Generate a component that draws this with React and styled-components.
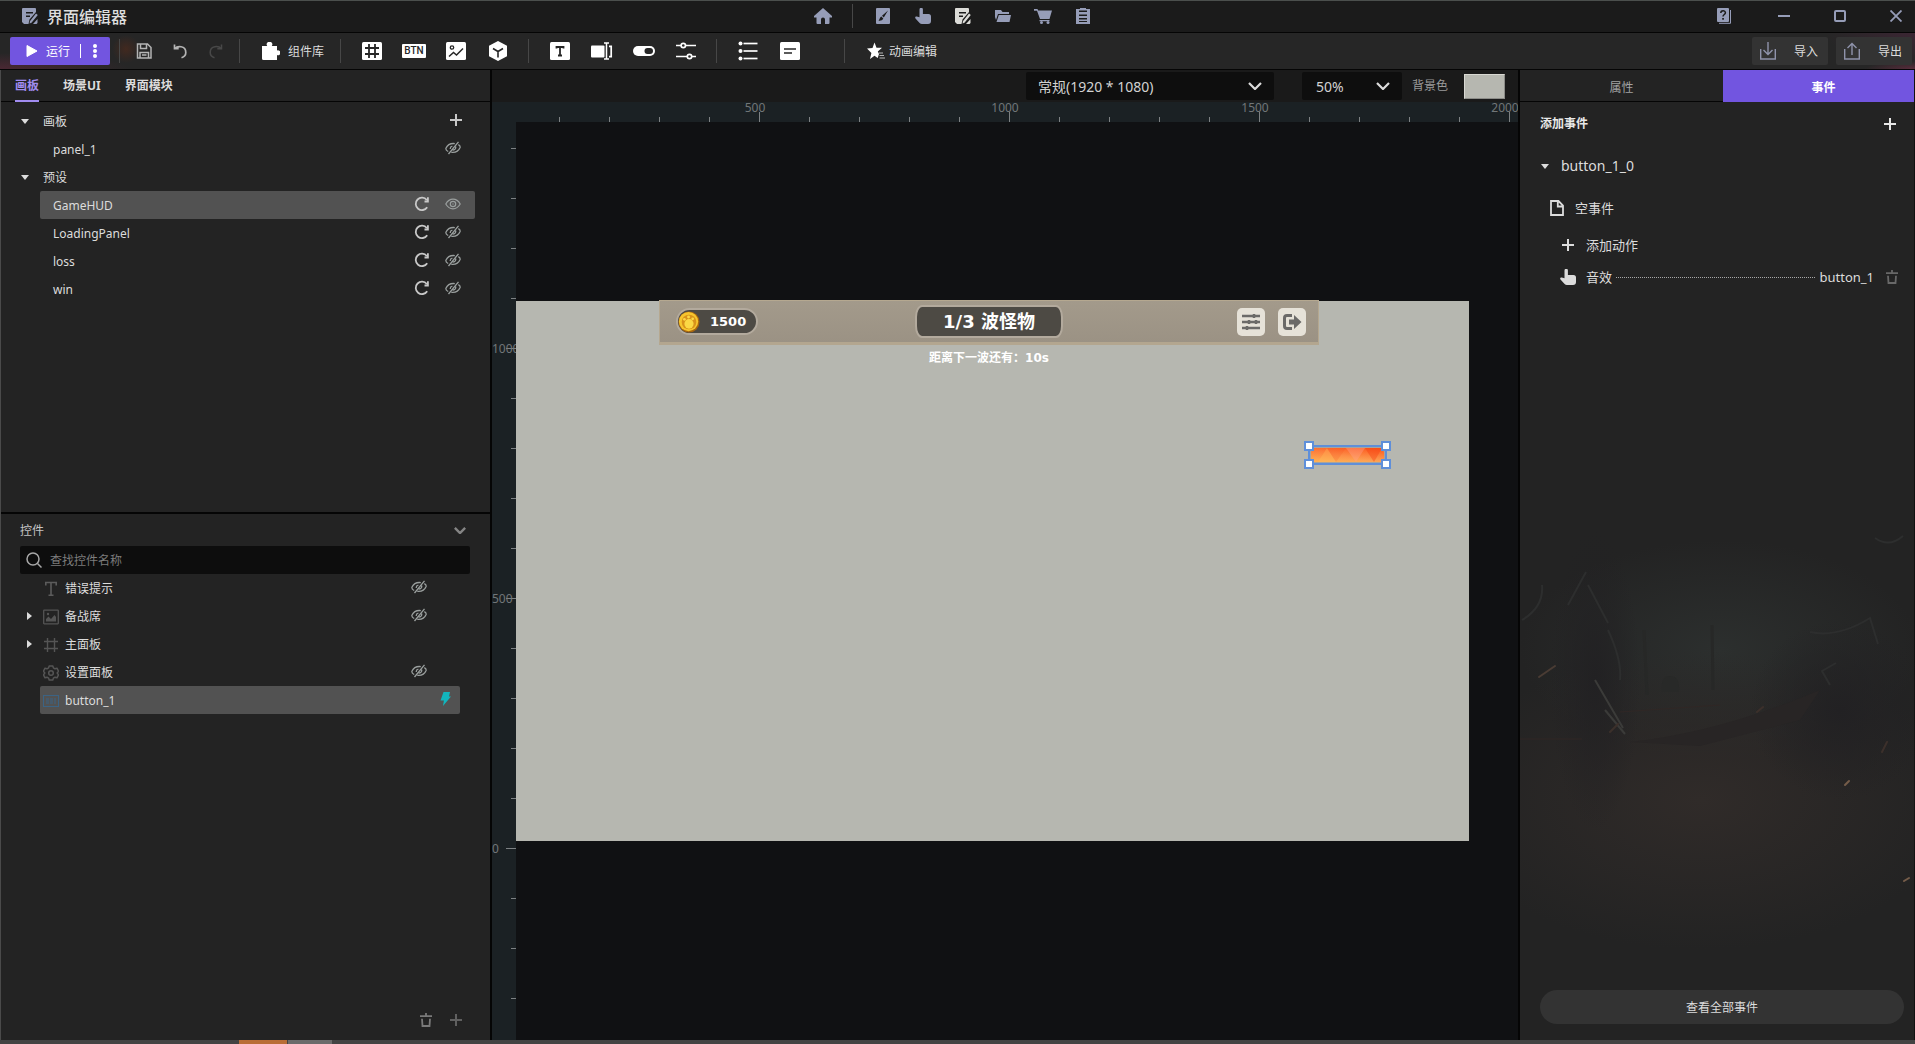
import React, { useState } from "react";
import styled, { createGlobalStyle, css } from "styled-components";

const GlobalStyle = createGlobalStyle`
  * {
    box-sizing: border-box;
  }

  body {
    margin: 0;
    background: #232323;
    color: #dcdcdc;
    font: 12px/16px "Noto Sans", "Noto Sans CJK SC", sans-serif;
  }

  button, input, select {
    font: inherit;
    color: inherit;
  }

  button {
    padding: 0;
    border: 0;
    background: none;
    cursor: pointer;
  }

  svg {
    display: block;
    flex: none;
  }

  ul {
    list-style: none;
    margin: 0;
    padding: 0;
  }
`;

/* ---------- icons ---------- */

const Svg = ({ size = 16, w, h, box = "0 0 16 16", children, ...rest }) => (
  <svg width={w || size} height={h || size} viewBox={box} fill="none" aria-hidden="true" {...rest}>
    {children}
  </svg>
);

const NoteIcon = (p) => (
  <Svg {...p}>
    <path
      fill="currentColor"
      fillRule="evenodd"
      d="M1 0h12a1 1 0 0 1 1 1v3L7.500 11.500 6.500 16H2l-2-2V1a1 1 0 0 1 1-1zm3 4v1.500h7V4zm0 3.500V9h4V7.500z"
    />
    <path fill="currentColor" d="M14 5.500l1.800 1.600L9.500 14.800 7.600 15.500l.3-2.300zM11 16l4.500-5V15l-1 1z" />
  </Svg>
);
const HomeIcon = () => (
  <Svg w={18} h={16} box="0 0 18 16">
    <path fill="currentColor" d="M9 0l9 8v1.500h-2.500V15a1 1 0 0 1-1 1H11v-4.500a2 2 0 0 0-4 0V16H3.500a1 1 0 0 1-1-1V9.500H0V8z" />
  </Svg>
);
const PaintIcon = () => (
  <Svg>
    <rect x="1" width="14" height="16" rx="1" fill="currentColor" />
    <path fill="#1b1b1b" d="M13 2.500L8.800 9.500 7 7.800zM6.300 8.600l2 2C7.500 12.500 5.500 13 3.500 12.700c1.300-.8.800-2.900 2.800-4.100z" />
  </Svg>
);
const HandIcon = () => (
  <Svg>
    <path
      fill="currentColor"
      d="M4.500 1.500a1.700 1.700 0 0 1 3.400 0V6h5.600A2.500 2.500 0 0 1 16 8.500V13a3 3 0 0 1-3 3H7c-1 0-1.800-.4-2.400-1.100L.5 10.500C-.3 9.300.4 8.200 1.800 8.400l2.700.9z"
    />
  </Svg>
);
const FolderIcon = () => (
  <Svg>
    <path fill="currentColor" d="M0 2h6l1.500 2H14v2H3L1 12 0 9zM3.800 7H16l-1.500 7H1.500z" />
  </Svg>
);
const CartIcon = () => (
  <Svg w={18} h={16} box="0 0 18 16">
    <path fill="currentColor" d="M0 1h3.500l.6 1.500H18L15.500 11H6L3 2.800H0zM5.500 12h10v1.200h-10z" />
    <circle cx="7.500" cy="14.500" r="1.500" fill="currentColor" />
    <circle cx="14" cy="14.500" r="1.500" fill="currentColor" />
  </Svg>
);
const ClipboardIcon = () => (
  <Svg>
    <path fill="currentColor" fillRule="evenodd" d="M1 1h4V0h6v1h4v15H1zm3 1.500V4h8V2.500zm0 4V8h8V6.500zm0 3.500v1.500h8V10zm0 3v1h8v-1z" />
  </Svg>
);
const HelpIcon = () => (
  <Svg>
    <rect x="1" y="0" width="12" height="14" rx="1" fill="currentColor" />
    <path d="M14.500 2v13.300H3" stroke="currentColor" />
    <path d="M4.800 5c0-3 4.600-2.900 4.600-.2C9.400 6.500 7 6.500 7 8.500" stroke="#1b1b1b" strokeWidth="1.500" />
    <rect x="6.200" y="10" width="1.700" height="1.700" fill="#1b1b1b" />
  </Svg>
);
const MinIcon = () => (
  <Svg size={12} box="0 0 12 12">
    <path d="M0 6h12" stroke="currentColor" strokeWidth="2" />
  </Svg>
);
const MaxIcon = () => (
  <Svg size={12} box="0 0 12 12">
    <rect x="1" y="1" width="10" height="10" rx="1" stroke="currentColor" strokeWidth="2" />
  </Svg>
);
const CloseIcon = () => (
  <Svg size={12} box="0 0 12 12">
    <path d="M0.500 0.500l11 11M11.500 0.500l-11 11" stroke="currentColor" strokeWidth="1.800" />
  </Svg>
);
const PlayIcon = () => (
  <Svg w={12} h={12} box="0 0 12 12">
    <path d="M1 0.500v11l10-5.500z" fill="currentColor" stroke="currentColor" strokeLinejoin="round" />
  </Svg>
);
const MoreIcon = () => (
  <Svg w={4} h={14} box="0 0 4 14">
    {[2, 7, 12].map((y) => (
      <circle key={y} cx="2" cy={y} r="2" fill="currentColor" />
    ))}
  </Svg>
);
const SaveIcon = () => (
  <Svg stroke="currentColor" strokeWidth="1.500">
    <path d="M1.500 1h10L15 4.500V15H1.500zM4.500 1.500v4h6v-4M4 15V9.500h8.500V15M6 12h4.500" />
  </Svg>
);
const UndoIcon = () => (
  <Svg stroke="currentColor" strokeWidth="1.700">
    <path d="M2.500 1.500v4.200h4.200M3 5.500C5 3 13.800 2 13.800 9.500c0 3-2 4.500-4.300 5.300" />
  </Svg>
);
const RedoIcon = () => (
  <Svg stroke="currentColor" strokeWidth="1.500">
    <path d="M13.500 1.500v4.200H9.300M13 5.500C11 3 2.200 2 2.200 9.500c0 3 2 4.500 4.300 5.300" />
  </Svg>
);
const PuzzleIcon = () => (
  <Svg size={18} box="0 0 18 18">
    <path fill="currentColor" d="M0 4h5.200a2.800 2.800 0 1 1 4.600 0H15v4.500a2.500 2.500 0 1 1 0 4.600V18H1.500A1.500 1.500 0 0 1 0 16.500z" />
  </Svg>
);
const GridIcon = () => (
  <Svg size={20} box="0 0 20 20">
    <rect y="1" width="20" height="18" rx="1.500" fill="currentColor" />
    <path d="M7 3v14M13 3v14M3 7h14M3 13h14" stroke="#262626" strokeWidth="1.800" />
  </Svg>
);
const ImageIcon = () => (
  <Svg size={20} box="0 0 20 20">
    <rect y="1" width="20" height="18" rx="1.500" fill="currentColor" />
    <circle cx="6" cy="6.500" r="1.700" stroke="#262626" strokeWidth="1.300" />
    <path d="M3 15.500l4.500-4 3 2.500L17 7.500" stroke="#262626" strokeWidth="1.500" />
  </Svg>
);
const CubeIcon = () => (
  <Svg size={20} box="0 0 20 20">
    <path d="M10 0l9 4.800v10.400L10 20l-9-4.800V4.800z" fill="currentColor" />
    <path d="M5 7.500l5 3 5-3M10 10.500v6" stroke="#262626" strokeWidth="1.600" />
  </Svg>
);
const TextIcon = () => (
  <Svg size={20} box="0 0 20 20">
    <rect y="1" width="20" height="18" rx="1.500" fill="currentColor" />
    <path d="M6.500 7.500V6h7v1.500M10 6v9M8 14.500h4" stroke="#262626" strokeWidth="1.800" />
  </Svg>
);
const InputIcon = () => (
  <Svg w={22} h={18} box="0 0 22 18">
    <rect y="3.500" width="13.500" height="12" rx="1" fill="currentColor" />
    <path d="M13 1h5M15.500 1v16M13 17h5" stroke="currentColor" strokeWidth="1.500" />
    <path d="M18 4.300h2.200v10.400H18" stroke="currentColor" strokeWidth="1.700" />
  </Svg>
);
const SwitchIcon = () => (
  <Svg w={22} h={10} box="0 0 22 10">
    <rect width="22" height="10" rx="5" fill="currentColor" />
    <rect x="11.500" y="2" width="8.500" height="6" rx="3" fill="#262626" />
  </Svg>
);
const SlidersIcon = () => (
  <Svg size={20} box="0 0 20 20" stroke="currentColor" strokeWidth="1.700">
    <path d="M0 4.500h5M9.500 4.500H20M0 15.500h11M16 15.500h4" />
    <circle cx="7.300" cy="4.500" r="2.200" />
    <circle cx="13.500" cy="15.500" r="2.200" />
  </Svg>
);
const ListIcon = () => (
  <Svg size={20} box="0 0 20 20">
    {[2.5, 10, 17.5].map((y) => (
      <g key={y}>
        <circle cx="2.500" cy={y} r="2" fill="currentColor" />
        <path d={`M5.500 ${y}h14`} stroke="currentColor" strokeWidth="1.700" />
      </g>
    ))}
  </Svg>
);
const TextAreaIcon = () => (
  <Svg size={20} box="0 0 20 20">
    <rect y="1" width="20" height="18" rx="1.500" fill="currentColor" />
    <path d="M4 8h12M4 12h8" stroke="#262626" strokeWidth="1.700" />
  </Svg>
);
const StarIcon = () => (
  <Svg size={18} box="0 0 18 18">
    <path fill="currentColor" d="M7.500 0.500l2 5.300h5.500l-4.200 3.600 1.200 2.600-1.300 4-3.200-2.300L3 17l1.400-6L0 6.500l5.500-.5z" />
    <path d="M12 11h4M12.500 13.500h4.500M12.500 16h5.500" stroke="#b8b8b8" />
  </Svg>
);
const ImportIcon = ({ up }) => (
  <Svg w={16} h={18} box="0 0 16 18" stroke="currentColor" strokeWidth="1.400">
    <path d="M.7 7v10h14.600V7" />
    <path d={up ? "M8 13V2M3.500 6L8 1.500 12.500 6" : "M8 0v12M3.500 8L8 12.500 12.500 8"} />
  </Svg>
);
const PlusIcon = () => (
  <Svg size={12} box="0 0 12 12">
    <path d="M6 0v12M0 6h12" stroke="currentColor" strokeWidth="2" />
  </Svg>
);
const TrashIcon = () => (
  <Svg w={12} h={14} box="0 0 12 14" stroke="currentColor" strokeWidth="1.800">
    <path d="M0 3.200h12M6 0v3M2 5.800l.5 7.200h7l.5-7.200" />
  </Svg>
);
const ChevronIcon = ({ small }) => (
  <Svg w={small ? 12 : 14} h={small ? 7 : 8} box="0 0 14 8">
    <path d="M1 1l6 6 6-6" stroke="currentColor" strokeWidth={small ? 2.800 : 2.200} />
  </Svg>
);
const Caret = ({ right }) => (
  <Svg w={right ? 5 : 8} h={right ? 8 : 5} box={right ? "0 0 5 8" : "0 0 8 5"}>
    <path fill="currentColor" d={right ? "M0 0v8l5-4z" : "M0 0h8L4 5z"} />
  </Svg>
);
const EyeIcon = () => (
  <Svg stroke="currentColor" strokeWidth="1.200">
    <path d="M.8 8C4.500 1.600 11.500 1.600 15.200 8 11.500 14.400 4.500 14.400.8 8z" />
    <circle cx="8" cy="8" r="2.700" />
    <circle cx="8" cy="8" r="0.700" fill="currentColor" stroke="none" />
  </Svg>
);
const EyeOffIcon = () => (
  <Svg stroke="currentColor" strokeWidth="1.300">
    <path d="M3.200 11.500C1.300 10.500.7 9.300.9 8.300 2.500 4.800 6 3.200 9.800 3.600M3.500 14L13.500 1.800M13.300 4.600c1.500.8 2 1.900 1.800 2.900-1.500 3.600-5.200 5.200-8.800 4.800M10.600 6.600c.6 2-1 3.500-2.900 3.600M5.300 9c-.2-1.400.6-2.500 2.100-2.800" />
  </Svg>
);
const RefreshIcon = () => (
  <Svg stroke="currentColor" strokeWidth="1.800">
    <path d="M13.200 11.200A6.200 6.200 0 1 1 12.800 4M13.900 1.200v4.300H10.500" />
  </Svg>
);
const SearchIcon = () => (
  <Svg stroke="currentColor" strokeWidth="1.500">
    <circle cx="7" cy="7" r="6" />
    <path d="M11.500 11.500l4 4" />
  </Svg>
);
const TIcon = () => (
  <Svg stroke="#5c5c5c" strokeWidth="1.600">
    <path d="M2.800 4.500v-3h10.400v3M8 1.500v13M5.500 14.300h5" />
  </Svg>
);
const PictureIcon = () => (
  <Svg color="#555">
    <rect x="0.700" y="1.200" width="14.600" height="13.600" rx="0.500" stroke="currentColor" strokeWidth="1.300" />
    <path d="M3 12.500V10l2.500-2.500L8 10l3.500-4L13 8v4.500z" fill="currentColor" />
    <circle cx="5" cy="5" r="1.200" fill="currentColor" />
  </Svg>
);
const HashIcon = () => (
  <Svg stroke="#555" strokeWidth="1.400">
    <path d="M4.500 1v14M11.500 1v14M1 4.500h14M1 11.500h14" />
  </Svg>
);
const GearIcon = () => (
  <Svg stroke="#555" strokeWidth="1.500" strokeLinejoin="round">
    <path d="M6.200.9h3.600l.6 2 1.600.9 2-.6 1.500 2.900L14.200 8l1.300 1.900-1.500 2.900-2-.6-1.600.9-.6 2H6.200l-.6-2-1.600-.9-2 .6L.5 9.900 1.800 8 .5 6.100 2 3.200l2 .6 1.600-.9z" />
    <circle cx="8" cy="8" r="2.300" />
  </Svg>
);
const ButtonIcon = () => (
  <Svg stroke="#3b6384">
    <rect x="0.500" y="2.500" width="15" height="11" />
    <path d="M3 6h10M3 8h10M3 10h10" strokeDasharray="3 1" />
  </Svg>
);
const BoltIcon = () => (
  <Svg>
    <path fill="#12b5bd" d="M6.500 1h6.500l-1 4.500h2L6 15l.9-5.500H3.500z" />
  </Svg>
);
const DocIcon = () => (
  <Svg stroke="currentColor" strokeWidth="1.800">
    <path d="M2 1h7.500L14 5.500V15H2zM8.800 1v5.500H14" />
  </Svg>
);

/* ---------- frame ---------- */

const Shell = styled.div`
  display: flex;
  flex-direction: column;
  height: 100vh;
  min-width: 1280px;
  overflow: hidden;
  border-top: 1px solid #4b4f4d;
`;

const TitleBar = styled.header`
  display: grid;
  grid-template-columns: 1fr auto 1fr;
  align-items: center;
  height: 32px;
  padding: 0 13px 1px 22px;
  background: #1b1b1b;
  border-bottom: 1px solid #050505;
  color: #969db8;
`;

const AppTitle = styled.h1`
  display: flex;
  align-items: center;
  gap: 9px;
  margin: 0;
  font-size: 16px;
  line-height: 24px;
  font-weight: 500;

  span {
    padding-top: 2px;
    color: #dedede;
  }
`;

const ModeNav = styled.nav`
  display: flex;
  align-items: center;
  padding-right: 19px;
`;

const ModeButton = styled.button`
  display: grid;
  place-items: center;
  width: 40px;
  height: 24px;
  color: ${({ $active }) => ($active ? "#dcdcd8" : "#969db8")};
`;

const Divider = styled.i`
  width: 1px;
  height: 24px;
  background: #474747;
  margin: 0 10px 0 9px;
`;

const WindowControls = styled.div`
  display: flex;
  align-items: center;
  justify-content: flex-end;
  gap: 44px;

  button:first-child {
    padding-right: 2px;
  }
`;

const Toolbar = styled.div`
  display: flex;
  align-items: center;
  height: 37px;
  flex: none;
  padding: 0 3px 0 10px;
  border-bottom: 1px solid #050505;
  background:
    radial-gradient(ellipse 130px 16px at 0 100%, #4a2833 0%, transparent 100%),
    radial-gradient(circle 14px at 126px 16px, #42291f, transparent),
    radial-gradient(ellipse 90px 30px at 100% 0, #3b2633, transparent),
    radial-gradient(ellipse 50px 8px at 100% 100%, #5a2c3c, transparent),
    #262626;

  button span {
    padding-top: 1px;
  }
`;

const RunButton = styled.div`
  display: flex;
  align-items: center;
  width: 100px;
  height: 28px;
  padding-left: 16px;
  border-radius: 2px;
  background: #7255e0;
  color: #fff;

  button {
    display: flex;
    align-items: center;
    gap: 8px;
    height: 28px;
  }

  button + button {
    margin-left: 10px;
    gap: 12px;

    &::before {
      content: "";
      width: 1px;
      height: 14px;
      background: #fff;
    }
  }
`;

const History = styled.div`
  display: flex;
  gap: 20px;
  padding: 0 6px;
  color: #b4b4b4;

  button:disabled {
    color: #484848;
  }
`;

const LabelButton = styled.button`
  display: flex;
  align-items: center;
  gap: ${({ $gap }) => $gap || 8}px;
  padding: 0 7px 0 12px;
  color: #fff;

  span {
    color: #dcdcdc;
  }
`;

const ToolGroup = styled.div`
  display: flex;
  color: #fff;
  margin-right: ${({ $last }) => ($last ? 24 : 0)}px;
`;

const ToolButton = styled.button`
  display: grid;
  place-items: center;
  width: 42px;
  height: 28px;
`;

const BtnGlyph = styled.b`
  width: 24px;
  height: 14px;
  border-radius: 1px;
  background: #fff;
  color: #262626;
  font: 500 10px/14px Roboto, sans-serif;
  text-align: center;
`;

const TransferGroup = styled.div`
  display: flex;
  gap: 8px;
  margin-left: auto;
`;

const TransferButton = styled.button`
  display: flex;
  align-items: center;
  justify-content: space-between;
  width: 76px;
  height: 28px;
  padding: 0 10px 0 8px;
  border-radius: 2px;
  background: #333;
  color: #8f93ab;

  span {
    color: #dcdcdc;
  }
`;

const Workspace = styled.main`
  display: grid;
  grid-template-columns: 492px minmax(0, 1fr) 397px;
  flex: 1;
  min-height: 0;
`;

const StatusStrip = styled.footer`
  display: flex;
  gap: 1px;
  height: 4px;
  flex: none;
  padding-left: 239px;
  background: #434343;

  i {
    width: 48px;
    background: #b96d36;
  }

  i + i {
    width: 44px;
    background: #6b6b6b;
  }
`;

/* ---------- left side ---------- */

const LeftSide = styled.aside`
  display: flex;
  flex-direction: column;
  min-height: 0;
  border-left: 1px solid #4a4a4a;
  border-right: 2px solid #050505;
`;

const Section = styled.section`
  display: flex;
  flex-direction: column;
  flex: ${({ $grow }) => $grow} 1 0;
  min-height: 0;

  & + & {
    border-top: 2px solid #050505;
  }
`;

const TabList = styled.div`
  display: flex;
  gap: 24px;
  height: 32px;
  padding-left: 14px;
  border-bottom: 1px solid #050505;
`;

const Tab = styled.button`
  height: 32px;
  padding-top: 2px;
  font-weight: 700;
  color: #dcdcdc;
  border-bottom: 2px solid transparent;

  ${({ $active }) =>
    $active &&
    css`
      color: #a18cf0;
      border-color: #a18cf0;
    `}
`;

const Tree = styled.ul`
  padding-top: ${({ $top }) => $top || 0}px;
`;

const TreeRow = styled.li`
  display: flex;
  height: 28px;
  padding-right: ${({ $controls }) => ($controls ? 30 : 15)}px;
`;

const CaretSlot = styled.span`
  display: flex;
  align-items: center;
  width: 39px;
  padding-left: ${({ $controls }) => ($controls ? 26 : 20)}px;
`;

const RowBody = styled.div`
  display: flex;
  align-items: center;
  flex: 1;
  gap: 6px;
  padding: 2px ${({ $end }) => $end || 13}px 0 ${({ $indent }) => ($indent ? 13 : 3)}px;
  border-radius: 2px;
  background: ${({ $selected }) => ($selected ? "#525252" : "transparent")};
  color: #dcdcdc;
`;

const RowActions = styled.span`
  display: flex;
  align-items: center;
  gap: ${({ $gap }) => $gap || 15}px;
  margin-left: auto;
  padding-bottom: 4px;
  color: #c8c8c8;
`;

const EyeButton = styled.button`
  width: 16px;
  height: 16px;
  color: #9a9f9e;
`;

const EventSlot = styled.span`
  width: 16px;
  height: 16px;
`;

const ControlsHead = styled.div`
  display: flex;
  align-items: center;
  justify-content: space-between;
  height: 32px;
  padding: 1px 24px 0 19px;
  color: #c4c4c4;

  button {
    color: #858585;
  }
`;

const SearchBox = styled.label`
  display: flex;
  align-items: center;
  gap: 8px;
  height: 28px;
  margin: 0 20px 0 19px;
  padding: 0 6px;
  border-radius: 2px;
  background: #0d0d0d;
  color: #a8a8a8;

  input {
    flex: 1;
    min-width: 0;
    padding: 1px 0 0;
    border: 0;
    outline: 0;
    background: none;
  }

  input::placeholder {
    color: #7c7c7c;
    opacity: 1;
  }
`;

const ControlsFoot = styled.div`
  display: flex;
  align-items: center;
  justify-content: flex-end;
  gap: 18px;
  height: 40px;
  margin-top: auto;
  padding-right: 28px;
  color: #7a7a7a;

  button + button {
    color: #606060;
  }
`;

/* ---------- stage ---------- */

const Stage = styled.section`
  display: grid;
  grid-template: 32px 20px minmax(0, 1fr) / 24px minmax(0, 1fr);
  min-height: 0;
  background: #1b2124;
`;

const StageBar = styled.div`
  grid-column: 1 / -1;
  display: flex;
  align-items: center;
  justify-content: flex-end;
  padding-right: 13px;
  background: #1a1a1a;
`;

const SelectBox = styled.div`
  display: grid;
  align-items: center;
  width: ${({ $width }) => $width}px;
  height: 28px;
  margin-right: ${({ $after }) => $after}px;
  border-radius: 2px;
  background: #0e0e0e;

  > * {
    grid-area: 1 / 1;
  }

  select {
    appearance: none;
    height: 28px;
    padding: 2px 14px 0 ${({ $pad }) => $pad || 12}px;
    border: 0;
    outline: 0;
    background: none;
    font-size: 14px;
    color: #d2d2d2;
  }

  svg {
    justify-self: end;
    margin-right: 12px;
    pointer-events: none;
  }
`;

const SwatchLabel = styled.label`
  display: flex;
  align-items: center;
  gap: 16px;
  color: #9a9a9a;

  input {
    width: 41px;
    height: 25px;
    padding: 0;
    border: 1px solid;
    border-color: #d8d8d2 #8c8c88 #8c8c88 #d8d8d2;
    background: #b6b7b0;
  }

  input::-webkit-color-swatch-wrapper {
    padding: 0;
  }

  input::-webkit-color-swatch {
    border: 0;
  }
`;

const rulerText = css`
  position: absolute;
  color: #717678;
  font: 12px/12px "Noto Sans", sans-serif;
`;

const TopRuler = styled.div`
  grid-column: 1 / -1;
  display: flex;
  padding-left: 67px;
  overflow: hidden;
`;

const TopTick = styled.span`
  position: relative;
  flex: 0 0 50px;

  &::before {
    content: "";
    position: absolute;
    left: 0;
    bottom: 0;
    width: 1px;
    height: ${({ $major }) => ($major ? 10 : 5)}px;
    background: #7d8183;
  }

  span {
    ${rulerText}
    left: -4px;
    top: 0;
    transform: translateX(-50%);
  }
`;

const SideRuler = styled.div`
  display: flex;
  flex-direction: column;
  padding-top: 26px;
  overflow: hidden;
`;

const SideTick = styled.span`
  position: relative;
  flex: 0 0 50px;

  &::before {
    content: "";
    position: absolute;
    right: 0;
    top: 0;
    width: ${({ $major }) => ($major ? 10 : 5)}px;
    height: 1px;
    background: #7d8183;
  }

  span {
    ${rulerText}
    left: 0;
    top: -5px;
  }
`;

const Viewport = styled.div`
  position: relative;
  overflow: hidden;
  background: #101113;
`;

const Artboard = styled.div`
  position: absolute;
  left: -7px;
  top: 179px;
  width: 960px;
  height: 540px;
  background: #b6b7b0;
`;

const Hud = styled.div`
  position: absolute;
  left: 150px;
  top: -1px;
  width: 660px;
  height: 45px;
  display: grid;
  grid-template-columns: 1fr auto 1fr;
  align-items: center;
  padding: 0 12px;
  border: 1px solid #b5a890;
  border-bottom: 3px solid #b3a68f;
  background: linear-gradient(#a39a8b, #9b9284);
  color: #fff;
  font-family: "DejaVu Sans", "Noto Sans CJK SC", sans-serif;
  font-weight: 700;
`;

const CoinPill = styled.div`
  display: flex;
  align-items: center;
  gap: 10px;
  width: 82px;
  height: 27px;
  margin-left: 4px;
  border: 2px solid #b3aa9d;
  border-radius: 14px;
  background: #4d4a44;
  font-size: 13px;
`;

const WavePill = styled.div`
  width: 148px;
  height: 33px;
  border: 2px solid #b3aa9d;
  border-radius: 7px / 12px;
  background: #4d4a44;
  font-size: 18px;
  line-height: 29px;
  text-align: center;
`;

const HudButtons = styled.div`
  display: flex;
  justify-content: flex-end;
  gap: 13px;
`;

const HudButton = styled.button`
  display: grid;
  place-items: center;
  width: 28px;
  height: 28px;
  border-radius: 5px;
  background: #e6e2d8;
  color: #6b6a68;
`;

const Countdown = styled.p`
  position: absolute;
  left: 0;
  right: 0;
  top: 49px;
  margin: 0;
  color: #fff;
  font: 700 12px/16px "DejaVu Sans", "Noto Sans CJK SC", sans-serif;
  text-align: center;
`;

const SelectedNode = styled.div`
  position: absolute;
  left: 799px;
  top: 144px;
  width: 79px;
  height: 20px;
  border: 2px solid #5f8fd9;
`;

const Handle = styled.i`
  position: absolute;
  width: 10px;
  height: 10px;
  border: 2px solid #5f8fd9;
  background: #fff;
  ${({ $x }) => $x}: -6px;
  ${({ $y }) => $y}: -6px;
`;

/* ---------- right side ---------- */

const RightSide = styled.aside`
  position: relative;
  isolation: isolate;
  display: flex;
  flex-direction: column;
  min-height: 0;
  border-left: 2px solid #050505;
  border-right: 1px solid #111;
  background: #232323;
`;

const Backdrop = styled.svg`
  position: absolute;
  z-index: -1;
  left: 0;
  bottom: 0;
`;

const PanelTabs = styled.div`
  display: grid;
  grid-template-columns: 203fr 191fr;
  height: 32px;
  flex: none;
`;

const PanelTab = styled.button`
  padding: 5px 0 0 ${({ $inset }) => $inset || 0}px;
  color: #a2a2a2;
  border-bottom: 1px solid #050505;

  ${({ $active }) =>
    $active &&
    css`
      color: #fff;
      font-weight: 700;
      background: #7255e0;
      border-color: #7255e0;
    `}
`;

const EventRow = styled.div`
  display: flex;
  align-items: center;
  gap: ${({ $gap }) => $gap || 12}px;
  height: ${({ $tall }) => ($tall ? 42 : 32)}px;
  padding: 0 16px 0 ${({ $indent }) => $indent}px;
  font-size: ${({ $size }) => $size || 13}px;
  color: #dcdcdc;

  button {
    padding-left: 2px;
    color: #686868;
  }
`;

const EventHead = styled.h2`
  display: flex;
  align-items: center;
  justify-content: space-between;
  height: 43px;
  margin: 0;
  padding: 0 18px 0 20px;
  font-size: 12px;
  font-weight: 700;
  color: #e8e8e8;
`;

const Leader = styled.i`
  flex: 1;
  height: 1px;
  margin: 0 -6px;
  background: repeating-linear-gradient(90deg, #a8a8a8 0 1px, transparent 1px 2px);
`;

const AllEvents = styled.button`
  height: 34px;
  margin: auto 10px 16px 20px;
  padding-top: 2px;
  border-radius: 17px;
  background: #333;
  color: #dcdcdc;
`;

const modes = [
  ["绘制", PaintIcon],
  ["触发", HandIcon],
  ["界面", NoteIcon],
  ["资源", FolderIcon],
  ["商城", CartIcon],
  ["日志", ClipboardIcon],
];

const controls = [
  { name: "错误提示", Icon: TIcon, hidden: true },
  { name: "备战席", Icon: PictureIcon, hidden: true, folder: true },
  { name: "主面板", Icon: HashIcon, folder: true },
  { name: "设置面板", Icon: GearIcon, hidden: true },
  { name: "button_1", Icon: ButtonIcon, event: true },
];

const topTicks = Array.from({ length: 24 }, (_, i) => (i + 1) * 100);
const sideTicks = Array.from({ length: 19 }, (_, i) => 1400 - i * 100);

const PresetTree = () => {
  const [selected, setSelected] = useState("GameHUD");

  return (
    <Tree $top={5}>
      <TreeRow>
        <CaretSlot><Caret /></CaretSlot>
        <RowBody>
          画板
          <RowActions>
            <button aria-label="新建画板"><PlusIcon /></button>
          </RowActions>
        </RowBody>
      </TreeRow>
      <TreeRow>
        <CaretSlot />
        <RowBody $indent $end={14}>
          panel_1
          <RowActions>
            <EyeButton aria-label="显示 panel_1"><EyeOffIcon /></EyeButton>
          </RowActions>
        </RowBody>
      </TreeRow>
      <TreeRow>
        <CaretSlot><Caret /></CaretSlot>
        <RowBody>预设</RowBody>
      </TreeRow>
      {["GameHUD", "LoadingPanel", "loss", "win"].map((name) => (
        <TreeRow key={name} onClick={() => setSelected(name)}>
          <CaretSlot />
          <RowBody $indent $end={14} $selected={selected === name}>
            {name}
            <RowActions>
              <button aria-label={`重置 ${name}`}><RefreshIcon /></button>
              <EyeButton aria-label={`显示 ${name}`}>
                {name === "GameHUD" ? <EyeIcon /> : <EyeOffIcon />}
              </EyeButton>
            </RowActions>
          </RowBody>
        </TreeRow>
      ))}
    </Tree>
  );
};

const ControlTree = () => (
  <Tree>
    {controls.map(({ name, Icon, hidden, folder, event }) => (
      <TreeRow key={name} $controls>
        <CaretSlot $controls>{folder && <Caret right />}</CaretSlot>
        <RowBody $end={7} $selected={event}>
          <Icon />
          {name}
          <RowActions $gap={10}>
            {hidden && <EyeButton aria-label={`显示 ${name}`}><EyeOffIcon /></EyeButton>}
            <EventSlot>{event && <BoltIcon />}</EventSlot>
          </RowActions>
        </RowBody>
      </TreeRow>
    ))}
  </Tree>
);

const Coin = () => (
  <Svg size={22} box="0 0 24 24">
    <circle cx="12" cy="12" r="11.500" fill="#a8660f" />
    <circle cx="11.500" cy="11.500" r="10.500" fill="#f6c52e" />
    <circle cx="12" cy="12" r="8" fill="#d8921b" />
    <ellipse cx="12" cy="14" rx="5" ry="5.300" fill="#fbd845" />
    <circle cx="7" cy="9" r="1.500" fill="#fbd845" />
    <circle cx="11.500" cy="6.500" r="1.600" fill="#fbd845" />
    <circle cx="16" cy="8.500" r="1.500" fill="#fbd845" />
  </Svg>
);

const OrangeButton = () => (
  <svg width="75" height="16" viewBox="0 0 75 16" aria-hidden="true">
    <defs>
      <linearGradient id="fire" x1="0" y1="1" x2="1" y2="0">
        <stop offset="0" stopColor="#ffa648" />
        <stop offset="0.450" stopColor="#fb8a4c" />
        <stop offset="1" stopColor="#f8501a" />
      </linearGradient>
      <linearGradient id="glow" x1="0" y1="0" x2="0" y2="1">
        <stop offset="0" stopColor="#ff5a1e" stopOpacity="0.500" />
        <stop offset="1" stopColor="#ffc060" stopOpacity="0.500" />
      </linearGradient>
    </defs>
    <rect width="75" height="16" fill="#a8a39c" />
    <path d="M4 1h67l3 4v6l-3 4H4l-3-4V5z" fill="url(#fire)" />
    <path d="M4 1h67l3 4v6l-3 4H4l-3-4V5z" fill="url(#glow)" />
    <path d="M8 15L17 1l9 14z" fill="#ffbe5c" opacity=".35" />
    <path d="M17 1h19l-10 14z" fill="#f4501a" opacity=".18" />
    <path d="M36 1h19l-9 14z" fill="#ffa08a" opacity=".4" />
    <path d="M55 1l9 14 8-14z" fill="#f43f10" opacity=".4" />
  </svg>
);

const GameHud = () => (
  <Hud>
    <CoinPill>
      <Coin />
      1500
    </CoinPill>
    <WavePill>1/3 波怪物</WavePill>
    <HudButtons>
      <HudButton aria-label="设置">
        <Svg size={20} box="0 0 20 20" stroke="currentColor">
          <path d="M1 4h18M1 10h18M1 16h18M13 2v4M8 8v4M15 8v4M6 14v4" strokeWidth="2.500" />
        </Svg>
      </HudButton>
      <HudButton aria-label="退出">
        <Svg size={20} box="0 0 20 20">
          <path d="M10 3.500H5a2.500 2.500 0 0 0-2.500 2.500v8A2.500 2.500 0 0 0 5 16.500h5" stroke="currentColor" strokeWidth="3" />
          <path d="M7 7.500h5V3l7.500 7-7.500 7v-4.500H7z" fill="currentColor" />
        </Svg>
      </HudButton>
    </HudButtons>
  </Hud>
);

// dim battlefield art behind the event list
const BattlefieldArt = () => (
  <Backdrop width="395" height="600" viewBox="20 0 395 600" aria-hidden="true">
    <defs>
      <radialGradient id="sky">
        <stop offset="0" stopColor="#2c2f2e" />
        <stop offset="1" stopColor="#2c2f2e" stopOpacity="0" />
      </radialGradient>
      <radialGradient id="ground">
        <stop offset="0" stopColor="#302b29" />
        <stop offset="1" stopColor="#302b29" stopOpacity="0" />
      </radialGradient>
      <radialGradient id="shade">
        <stop offset="0" stopColor="#222123" />
        <stop offset="1" stopColor="#222123" stopOpacity="0" />
      </radialGradient>
    </defs>
    <ellipse cx="220" cy="210" rx="200" ry="110" fill="url(#sky)" />
    <ellipse cx="200" cy="360" rx="260" ry="150" fill="url(#ground)" />
    <ellipse cx="95" cy="240" rx="45" ry="150" fill="url(#shade)" />
    <ellipse cx="340" cy="270" rx="90" ry="90" fill="url(#shade)" />
    <path d="M130 302q90-10 190-52l-20 30-100 26z" fill="#282525" />
    <path d="M20 299h62M120 272l100-7" stroke="#302725" />
    <path d="M144 190l3 65M212 185l1 65" stroke="#272827" strokeWidth="3" />
    <path d="M162 252q-2-16 8-16t9 16z" fill="#282928" />
    <g fill="none" stroke="#2d2e2e" strokeWidth="2">
      <path d="M68 165l18-33M88 145l20 38M108 190q14 30 12 50M42 145q2 22-20 35" />
      <path d="M95 240l28 48M105 270l20 24" stroke="#3b3b39" />
      <path d="M310 192q28 6 60-14l8 26M330 245l-8-14 14-8M375 98q14 10 28-2" />
    </g>
    <g fill="none" strokeLinecap="round" strokeWidth="2">
      <path d="M39 237l16-11" stroke="#4a3c34" />
      <path d="M345 345l4-4M404 441l5-3" stroke="#755c49" />
      <path d="M382 312l5-10M257 272l6-5M110 292l8-8" stroke="#3c302b" />
    </g>
  </Backdrop>
);

function App() {
  const [tab, setTab] = useState("画板");
  const [panel, setPanel] = useState("事件");

  return (
    <Shell>
      <GlobalStyle />
      <TitleBar>
        <AppTitle>
          <NoteIcon />
          <span>界面编辑器</span>
        </AppTitle>
        <ModeNav>
          <ModeButton aria-label="主页"><HomeIcon /></ModeButton>
          <Divider />
          {modes.map(([name, Icon]) => (
            <ModeButton key={name} aria-label={name} $active={name === "界面"}>
              <Icon />
            </ModeButton>
          ))}
        </ModeNav>
        <WindowControls>
          <button aria-label="帮助"><HelpIcon /></button>
          <button aria-label="最小化"><MinIcon /></button>
          <button aria-label="最大化"><MaxIcon /></button>
          <button aria-label="关闭"><CloseIcon /></button>
        </WindowControls>
      </TitleBar>

      <Toolbar>
        <RunButton>
          <button><PlayIcon /><span>运行</span></button>
          <button aria-label="运行选项"><MoreIcon /></button>
        </RunButton>
        <Divider />
        <History>
          <button aria-label="保存"><SaveIcon /></button>
          <button aria-label="撤销"><UndoIcon /></button>
          <button aria-label="重做" disabled><RedoIcon /></button>
        </History>
        <Divider />
        <LabelButton><PuzzleIcon /><span>组件库</span></LabelButton>
        <Divider />
        <ToolGroup>
          <ToolButton aria-label="面板"><GridIcon /></ToolButton>
          <ToolButton aria-label="按钮"><BtnGlyph>BTN</BtnGlyph></ToolButton>
          <ToolButton aria-label="图片"><ImageIcon /></ToolButton>
          <ToolButton aria-label="模型"><CubeIcon /></ToolButton>
        </ToolGroup>
        <Divider />
        <ToolGroup>
          <ToolButton aria-label="文本"><TextIcon /></ToolButton>
          <ToolButton aria-label="输入框"><InputIcon /></ToolButton>
          <ToolButton aria-label="开关"><SwitchIcon /></ToolButton>
          <ToolButton aria-label="滑动条"><SlidersIcon /></ToolButton>
        </ToolGroup>
        <Divider />
        <ToolGroup $last>
          <ToolButton aria-label="列表"><ListIcon /></ToolButton>
          <ToolButton aria-label="文本域"><TextAreaIcon /></ToolButton>
        </ToolGroup>
        <Divider />
        <LabelButton $gap={4}><StarIcon /><span>动画编辑</span></LabelButton>
        <TransferGroup>
          <TransferButton><ImportIcon /><span>导入</span></TransferButton>
          <TransferButton><ImportIcon up /><span>导出</span></TransferButton>
        </TransferGroup>
      </Toolbar>

      <Workspace>
        <LeftSide>
          <Section $grow={443}>
            <TabList>
              {["画板", "场景UI", "界面模块"].map((name) => (
                <Tab key={name} $active={tab === name} onClick={() => setTab(name)}>
                  {name}
                </Tab>
              ))}
            </TabList>
            <PresetTree />
          </Section>
          <Section $grow={527}>
            <ControlsHead>
              控件
              <button aria-label="收起"><ChevronIcon small /></button>
            </ControlsHead>
            <SearchBox>
              <SearchIcon />
              <input placeholder="查找控件名称" aria-label="查找控件名称" />
            </SearchBox>
            <ControlTree />
            <ControlsFoot>
              <button aria-label="删除控件"><TrashIcon /></button>
              <button aria-label="添加控件"><PlusIcon /></button>
            </ControlsFoot>
          </Section>
        </LeftSide>

        <Stage>
          <StageBar>
            <SelectBox $width={248} $after={28}>
              <select aria-label="分辨率"><option>常规(1920 * 1080)</option></select>
              <ChevronIcon />
            </SelectBox>
            <SelectBox $width={100} $after={10} $pad={14}>
              <select aria-label="缩放"><option>50%</option></select>
              <ChevronIcon />
            </SelectBox>
            <SwatchLabel>
              背景色
              <input type="color" defaultValue="#b6b7b0" />
            </SwatchLabel>
          </StageBar>
          <TopRuler>
            {topTicks.map((v) => (
              <TopTick key={v} $major={v % 500 === 0}>
                {v % 500 === 0 && <span>{v}</span>}
              </TopTick>
            ))}
          </TopRuler>
          <SideRuler>
            {sideTicks.map((v) => (
              <SideTick key={v} $major={v % 500 === 0}>
                {v % 500 === 0 && <span>{v}</span>}
              </SideTick>
            ))}
          </SideRuler>
          <Viewport>
            <Artboard>
              <GameHud />
              <Countdown>距离下一波还有：10s</Countdown>
              <SelectedNode>
                <OrangeButton />
                <Handle $x="left" $y="top" />
                <Handle $x="right" $y="top" />
                <Handle $x="left" $y="bottom" />
                <Handle $x="right" $y="bottom" />
              </SelectedNode>
            </Artboard>
          </Viewport>
        </Stage>

        <RightSide>
          <BattlefieldArt />
          <PanelTabs>
            <PanelTab $active={panel === "属性"} onClick={() => setPanel("属性")}>
              属性
            </PanelTab>
            <PanelTab $inset={10} $active={panel === "事件"} onClick={() => setPanel("事件")}>
              事件
            </PanelTab>
          </PanelTabs>
          <EventHead>
            添加事件
            <button aria-label="添加事件"><PlusIcon /></button>
          </EventHead>
          <EventRow $tall $indent={21} $size={14}>
            <Caret />
            button_1_0
          </EventRow>
          <EventRow $tall $indent={29} $gap={10}>
            <DocIcon />
            空事件
          </EventRow>
          <EventRow $indent={42}>
            <PlusIcon />
            添加动作
          </EventRow>
          <EventRow $indent={40} $gap={10}>
            <HandIcon />
            音效
            <Leader />
            button_1
            <button aria-label="删除动作"><TrashIcon /></button>
          </EventRow>
          <AllEvents>查看全部事件</AllEvents>
        </RightSide>
      </Workspace>

      <StatusStrip>
        <i />
        <i />
      </StatusStrip>
    </Shell>
  );
}

export default App;
